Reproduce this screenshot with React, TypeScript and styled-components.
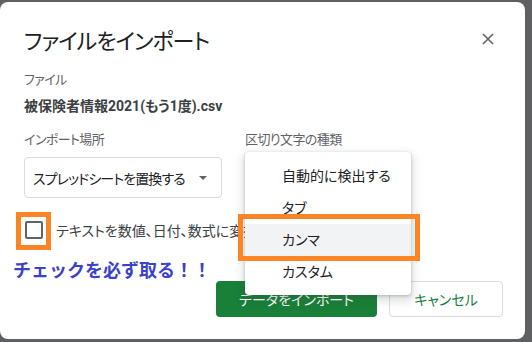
import { createGlobalStyle } from "styled-components";
import styled from "styled-components";

const GlobalStyle = createGlobalStyle`
  html, body {
    margin: 0;
    padding: 0;
    background: #5f6061;
  }
  body {
    width: 532px;
    height: 342px;
    overflow: hidden;
    font-family: Roboto, "Noto Sans CJK JP", sans-serif;
  }
`;

const Dialog = styled.div`
  position: relative;
  box-sizing: border-box;
  width: 525px;
  height: 337px;
  margin-top: 2px;
  padding: 0 22px 0 24px;
  background: #fff;
  border-radius: 8px;
  font-feature-settings: "palt";
`;

const Header = styled.div`
  display: flex;
  align-items: center;
  justify-content: space-between;
  height: 34px;
  padding-top: 20px;
`;

const Title = styled.h1`
  margin: 0;
  font-size: 22px;
  font-weight: 400;
  letter-spacing: -1px;
  color: #202124;
`;

const CloseButton = styled.div`
  width: 24px;
  height: 24px;
  margin-right: 3px;
  display: flex;
  align-items: center;
  justify-content: center;
`;

const Label = styled.div<{ $top: number }>`
  margin-top: ${(p) => p.$top}px;
  height: 20px;
  line-height: 20px;
  font-size: 13px;
  letter-spacing: -0.6px;
  color: #5f6368;
`;

const FileName = styled.div`
  margin-top: 6px;
  height: 20px;
  line-height: 20px;
  font-size: 14px;
  font-weight: 700;
  color: #3c4043;
`;

const Fields = styled.div`
  display: grid;
  grid-template-columns: 198px 1fr;
  column-gap: 23px;
  margin-top: 14px;
`;

const Field = styled.div`
  position: relative;
`;

const Select = styled.div`
  box-sizing: border-box;
  margin-top: 7px;
  height: 41px;
  display: flex;
  align-items: center;
  justify-content: space-between;
  padding: 0 14px 0 8px;
  border: 1px solid #dadce0;
  border-radius: 4px;
  font-size: 14px;
  letter-spacing: -0.9px;
  color: #202124;
`;

const Caret = styled.span`
  width: 0;
  height: 0;
  border-left: 4px solid transparent;
  border-right: 4px solid transparent;
  border-top: 4px solid #5f6368;
`;

const Menu = styled.div`
  position: absolute;
  top: 22px;
  left: 0;
  width: 166px;
  padding: 8px 0 7px;
  background: #fff;
  border-radius: 4px;
  box-shadow: 0 1px 3px rgba(60, 64, 67, 0.3), 0 4px 8px 3px rgba(60, 64, 67, 0.15);
  z-index: 2;
`;

const MenuItem = styled.div<{ $active?: boolean }>`
  height: 32px;
  line-height: 32px;
  padding-left: 37px;
  font-size: 14px;
  color: #202124;
  background: ${(p) => (p.$active ? "#f1f3f4" : "transparent")};
`;

const Highlight = styled.div<{ $l: number; $t: number; $w: number; $h: number }>`
  position: absolute;
  left: ${(p) => p.$l}px;
  top: ${(p) => p.$t}px;
  width: ${(p) => p.$w}px;
  height: ${(p) => p.$h}px;
  box-sizing: border-box;
  border: 5px solid #fb8424;
  pointer-events: none;
`;

const CheckRow = styled.div`
  display: flex;
  align-items: center;
  gap: 13px;
  margin-top: 20px;
  padding-left: 1px;
  height: 24px;
`;

const CheckWrap = styled.div`
  position: relative;
  width: 18px;
  height: 18px;
`;

const CheckBox = styled.div`
  box-sizing: border-box;
  width: 18px;
  height: 18px;
  border: 2px solid #5f6368;
  border-radius: 2px;
`;

const CheckLabel = styled.span`
  font-size: 14px;
  color: #3c4043;
  white-space: nowrap;
`;

const Footer = styled.div`
  display: flex;
  justify-content: space-between;
  align-items: flex-start;
  margin-top: 17px;
`;

const Note = styled.div`
  margin-left: -11px;
  height: 24px;
  line-height: 24px;
  font-size: 18px;
  font-weight: 700;
  color: #3b42c9;
  font-feature-settings: normal;
`;

const Buttons = styled.div`
  display: flex;
  gap: 12px;
  margin-top: 22px;
`;

const Button = styled.div<{ $primary?: boolean; $w: number }>`
  box-sizing: border-box;
  width: ${(p) => p.$w}px;
  height: 36px;
  display: flex;
  align-items: center;
  justify-content: center;
  border-radius: 4px;
  font-size: 14px;
  background: ${(p) => (p.$primary ? "#188038" : "#fff")};
  color: ${(p) => (p.$primary ? "#fff" : "#188038")};
  border: ${(p) => (p.$primary ? "none" : "1px solid #dadce0")};
`;

export default function App() {
  return (
    <>
      <GlobalStyle />
      <Dialog>
        <Header>
          <Title>ファイルをインポート</Title>
          <CloseButton>
            <svg width="12" height="12" viewBox="0 0 12 12">
              <path d="M1 1L11 11M11 1L1 11" stroke="#5f6368" strokeWidth="1.6" />
            </svg>
          </CloseButton>
        </Header>
        <Label $top={14}>ファイル</Label>
        <FileName>被保険者情報2021(もう1度).csv</FileName>
        <Fields>
          <Field>
            <Label $top={0}>インポート場所</Label>
            <Select>
              スプレッドシートを置換する
              <Caret />
            </Select>
          </Field>
          <Field>
            <Label $top={0}>区切り文字の種類</Label>
            <Menu>
              <MenuItem>自動的に検出する</MenuItem>
              <MenuItem>タブ</MenuItem>
              <MenuItem $active>カンマ</MenuItem>
              <MenuItem>カスタム</MenuItem>
              <Highlight $l={-7} $t={62} $w={182} $h={47} />
            </Menu>
          </Field>
        </Fields>
        <CheckRow>
          <CheckWrap>
            <CheckBox />
            <Highlight $l={-9} $t={-9} $w={35} $h={38} />
          </CheckWrap>
          <CheckLabel>テキストを数値、日付、数式に変換</CheckLabel>
        </CheckRow>
        <Footer>
          <Note>チェックを必ず取る！！</Note>
          <Buttons>
            <Button $primary $w={161}>データをインポート</Button>
            <Button $w={114}>キャンセル</Button>
          </Buttons>
        </Footer>
      </Dialog>
    </>
  );
}
